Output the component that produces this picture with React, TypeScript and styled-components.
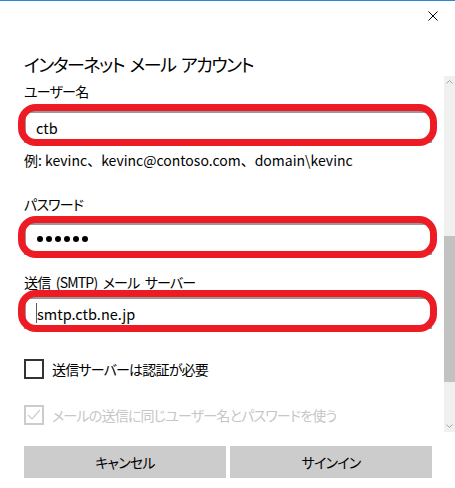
import React from 'react';
import styled, { createGlobalStyle } from 'styled-components';

const GlobalStyle = createGlobalStyle`
  html, body {
    margin: 0;
    padding: 0;
    background: #ffffff;
  }
`;

const Window = styled.div`
  width: 455px;
  height: 488px;
  box-sizing: border-box;
  border-top: 1px solid #2b88d8;
  display: flex;
  flex-direction: column;
  background: #ffffff;
  overflow: hidden;
  color: #000000;
  font-family: "Noto Sans CJK JP", "Noto Sans", sans-serif;
  font-feature-settings: "palt";
`;

const Header = styled.header`
  height: 75px;
  display: flex;
  flex-direction: column;
`;

const CloseRow = styled.div`
  display: flex;
  justify-content: flex-end;
  padding: 10px 17px 0 0;
`;

const CloseButton = styled.button`
  width: 10px;
  height: 10px;
  padding: 0;
  border: none;
  background: none;
  display: block;
  cursor: pointer;

  svg {
    display: block;
  }
`;

const Title = styled.h1`
  margin: auto 0 0 24px;
  font-size: 18px;
  font-weight: 400;
  line-height: 24px;
  letter-spacing: -1.5px;
  word-spacing: 3px;
`;

const ScrollArea = styled.div`
  height: 356px;
  display: flex;
`;

const Content = styled.div`
  flex: 1;
  padding: 5px 12px 0 24px;
  display: flex;
  flex-direction: column;
`;

const Label = styled.div<{ $top: number }>`
  margin-top: ${(p) => p.$top}px;
  font-size: 14px;
  line-height: 20px;
  letter-spacing: -0.8px;
  word-spacing: 3px;
`;

const InputWrap = styled.div<{ $top: number }>`
  position: relative;
  margin-top: ${(p) => p.$top}px;
`;

const Input = styled.div`
  height: 32px;
  box-sizing: border-box;
  border: 2px solid #999999;
  padding: 0 10px;
  display: flex;
  align-items: center;
  font-size: 14.5px;
`;

const Caret = styled.span`
  width: 1px;
  height: 20px;
  background: #5a5a5a;
`;

const Dots = styled.div`
  display: flex;
  gap: 3px;
  padding-left: 1px;
`;

const Dot = styled.span`
  width: 6px;
  height: 6px;
  border-radius: 50%;
  background: #000000;
`;

const Annotation = styled.span`
  position: absolute;
  left: -6px;
  right: -5px;
  top: -7px;
  bottom: -3px;
  border: 7px solid #ed1c24;
  border-radius: 18px;
  pointer-events: none;
`;

const Hint = styled.div`
  margin-top: 7px;
  font-size: 14px;
  line-height: 20px;
  font-feature-settings: normal;
`;

const CheckRow = styled.label<{ $top: number; $disabled?: boolean }>`
  margin-top: ${(p) => p.$top}px;
  display: flex;
  align-items: center;
  gap: 8px;
  font-size: 14px;
  line-height: 20px;
  letter-spacing: -0.8px;
  color: ${(p) => (p.$disabled ? '#c6c6c6' : '#000000')};
`;

const Box = styled.span<{ $disabled?: boolean }>`
  width: 20px;
  height: 20px;
  box-sizing: border-box;
  border: 2px solid ${(p) => (p.$disabled ? '#cccccc' : '#333333')};
  display: flex;
  align-items: center;
  justify-content: center;
`;

const Scrollbar = styled.div`
  width: 11px;
  background: #f0f0f0;
  display: flex;
  flex-direction: column;
  align-items: center;
`;

const Arrow = styled.div<{ $end?: boolean }>`
  height: 12px;
  margin-top: ${(p) => (p.$end ? 'auto' : '0')};
  display: flex;
  align-items: center;
  justify-content: center;
`;

const Thumb = styled.div`
  width: 11px;
  height: 146px;
  margin-top: 148px;
  background: #c2c2c2;
`;

const Footer = styled.footer`
  display: flex;
  gap: 4px;
  padding: 14px 23px 0 24px;
`;

const Button = styled.button`
  flex: 1;
  height: 32px;
  border: none;
  background: #cccccc;
  font-family: inherit;
  font-feature-settings: "palt";
  font-size: 14px;
  letter-spacing: -0.8px;
  color: #000000;
  padding: 0;
`;

const Chevron: React.FC<{ up?: boolean }> = ({ up }) => (
  <svg width="7" height="4" viewBox="0 0 7 4">
    <polyline
      points={up ? '0.5,3.5 3.5,0.5 6.5,3.5' : '0.5,0.5 3.5,3.5 6.5,0.5'}
      fill="none"
      stroke="#a6a6a6"
      strokeWidth="1"
    />
  </svg>
);

const App: React.FC = () => {
  return (
    <Window>
      <GlobalStyle />
      <Header>
        <CloseRow>
          <CloseButton type="button" aria-label="閉じる">
            <svg width="10" height="10" viewBox="0 0 10 10">
              <path d="M0.5 0.5 L9.5 9.5 M9.5 0.5 L0.5 9.5" stroke="#000" strokeWidth="1" />
            </svg>
          </CloseButton>
        </CloseRow>
        <Title>インターネット メール アカウント</Title>
      </Header>

      <ScrollArea>
        <Content>
          <Label $top={0}>ユーザー名</Label>
          <InputWrap $top={10}>
            <Input>ctb</Input>
            <Annotation />
          </InputWrap>
          <Hint>例: kevinc、kevinc@contoso.com、domain\kevinc</Hint>

          <Label $top={24}>パスワード</Label>
          <InputWrap $top={9}>
            <Input>
              <Dots>
                {Array.from({ length: 6 }).map((_, i) => (
                  <Dot key={i} />
                ))}
              </Dots>
            </Input>
            <Annotation />
          </InputWrap>

          <Label $top={17}>送信 (SMTP) メール サーバー</Label>
          <InputWrap $top={5}>
            <Input>
              <Caret />
              smtp.ctb.ne.jp
            </Input>
            <Annotation />
          </InputWrap>

          <CheckRow $top={30}>
            <Box />
            送信サーバーは認証が必要
          </CheckRow>
          <CheckRow $top={26} $disabled>
            <Box $disabled>
              <svg width="14" height="12" viewBox="0 0 14 12">
                <polyline points="1,6 5,10 13,1" fill="none" stroke="#cccccc" strokeWidth="1.2" />
              </svg>
            </Box>
            メールの送信に同じユーザー名とパスワードを使う
          </CheckRow>
        </Content>

        <Scrollbar>
          <Arrow>
            <Chevron up />
          </Arrow>
          <Thumb />
          <Arrow $end>
            <Chevron />
          </Arrow>
        </Scrollbar>
      </ScrollArea>

      <Footer>
        <Button type="button">キャンセル</Button>
        <Button type="button">サインイン</Button>
      </Footer>
    </Window>
  );
};

export default App;
